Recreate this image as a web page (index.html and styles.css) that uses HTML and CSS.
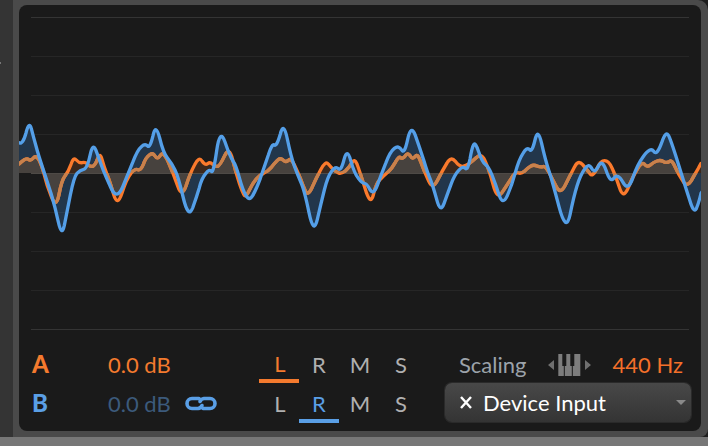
FILE: index.html
```html
<!DOCTYPE html>
<html lang="en">
<head>
<meta charset="utf-8">
<title>Oscilloscope</title>
<link rel="stylesheet" href="styles.css">
</head>
<body>
<div class="window">
  <div class="main">
    <div class="side"><span class="side-mark"></span></div>
    <div class="panel">
      <div class="inner">
        <svg class="scope" viewBox="57 15 2046 1005" width="682" height="335" aria-hidden="true">
          <defs>
            <path id="orange-wave" d="M0,519 L0,492 L57,492 Q78,472 85,478 Q92,483 100,474 Q108,464 117,480 Q125,495 133,525 Q140,555 154,590 Q168,628 177,584 Q185,540 195,528 Q205,515 213,493 Q220,470 229,480 Q238,490 247,488 Q255,485 263,493 Q270,500 278,499 Q285,497 293,476 Q300,455 306,478 Q312,500 321,523 Q330,545 341,584 Q352,622 366,579 Q380,535 393,520 Q405,505 414,509 Q422,512 430,493 Q437,473 448,465 Q458,456 465,468 Q472,480 481,466 Q490,452 505,486 Q520,520 533,558 Q545,595 558,558 Q570,520 584,494 Q597,468 606,483 Q615,497 623,491 Q630,485 638,493 Q645,500 653,499 Q660,497 674,467 Q688,437 698,479 Q708,520 718,550 Q728,580 733,586 Q738,592 748,571 Q758,550 768,538 Q778,525 791,520 Q803,515 813,503 Q823,490 832,481 Q841,472 849,480 Q856,488 865,481 Q873,473 883,494 Q893,515 901,535 Q908,555 916,573 Q923,590 936,563 Q948,535 962,509 Q976,482 985,492 Q993,502 1001,509 Q1008,515 1016,519 Q1023,523 1036,513 Q1048,502 1056,488 Q1063,474 1071,492 Q1078,510 1095,565 Q1111,620 1120,585 Q1128,550 1141,538 Q1153,525 1165,515 Q1176,505 1186,487 Q1196,468 1202,473 Q1208,478 1216,467 Q1223,456 1231,468 Q1238,480 1246,469 Q1253,458 1263,487 Q1273,515 1286,543 Q1298,570 1313,540 Q1328,510 1341,489 Q1353,468 1366,484 Q1378,500 1388,499 Q1398,497 1407,491 Q1416,485 1430,472 Q1444,458 1455,482 Q1466,505 1479,553 Q1491,600 1506,578 Q1521,555 1534,535 Q1546,515 1555,519 Q1564,522 1573,514 Q1581,505 1591,499 Q1601,493 1611,498 Q1621,502 1629,500 Q1636,497 1646,516 Q1656,535 1669,560 Q1681,585 1696,555 Q1711,525 1723,502 Q1734,478 1748,494 Q1761,510 1770,521 Q1778,532 1790,507 Q1801,482 1814,482 Q1826,482 1836,504 Q1846,525 1858,562 Q1869,598 1883,567 Q1896,535 1911,509 Q1926,483 1934,493 Q1941,503 1951,495 Q1961,486 1971,483 Q1981,479 1991,485 Q2001,490 2009,484 Q2016,478 2026,502 Q2036,525 2049,544 Q2061,563 2074,542 Q2086,520 2095,505 Q2103,490 2103,490 L2160,490 L2160,519"/>
            <path id="blue-wave" d="M0,519 L0,428 L57,428 Q68,436 78,399 Q87,362 94,386 Q100,410 108,438 Q115,465 128,503 Q140,540 153,580 Q165,620 175,666 Q185,712 193,676 Q200,640 211,585 Q222,530 231,520 Q240,510 251,508 Q262,505 270,467 Q278,428 287,449 Q295,470 305,498 Q315,525 333,564 Q350,602 368,561 Q385,520 399,485 Q412,450 424,440 Q435,430 443,438 Q450,445 459,407 Q467,368 479,414 Q490,460 503,475 Q515,490 525,510 Q535,530 550,594 Q565,657 578,624 Q590,590 598,563 Q605,535 617,521 Q628,506 634,514 Q640,522 650,452 Q660,382 675,426 Q690,470 699,483 Q708,495 718,533 Q728,570 738,587 Q748,604 758,587 Q768,570 781,535 Q793,500 805,465 Q816,430 823,435 Q830,440 841,402 Q851,363 862,417 Q873,470 883,498 Q893,525 903,548 Q913,570 927,638 Q941,706 952,658 Q963,610 973,570 Q983,530 995,514 Q1006,497 1015,506 Q1023,515 1032,479 Q1041,442 1052,481 Q1063,520 1075,535 Q1086,550 1093,550 Q1100,550 1110,569 Q1120,587 1132,556 Q1143,525 1157,490 Q1170,455 1183,445 Q1196,435 1205,450 Q1213,465 1223,418 Q1233,371 1246,406 Q1258,440 1271,480 Q1283,520 1291,538 Q1298,555 1310,598 Q1321,641 1332,611 Q1343,580 1353,553 Q1363,525 1376,511 Q1388,497 1396,505 Q1403,512 1410,477 Q1416,442 1421,434 Q1426,425 1436,455 Q1446,485 1456,493 Q1466,500 1476,525 Q1486,550 1497,584 Q1508,618 1522,587 Q1536,555 1546,518 Q1556,480 1569,460 Q1581,440 1589,449 Q1596,458 1605,420 Q1614,381 1625,431 Q1636,480 1646,510 Q1656,540 1677,620 Q1698,700 1710,645 Q1721,590 1731,558 Q1741,525 1754,507 Q1766,488 1775,505 Q1784,522 1795,499 Q1806,475 1819,513 Q1831,550 1842,534 Q1853,518 1869,547 Q1884,575 1898,535 Q1911,495 1931,468 Q1951,440 1961,454 Q1971,468 1985,428 Q1998,388 2007,409 Q2016,430 2036,495 Q2056,560 2069,600 Q2081,641 2089,626 Q2096,610 2103,580 L2160,500 L2160,519"/>
            <clipPath id="orange-clip"><use href="#orange-wave"/></clipPath>
            <clipPath id="blue-clip"><use href="#blue-wave"/></clipPath>
          </defs>
          <path class="grid-top" d="M93,52.5H2067M93,988.5H2067"/>
          <path class="grid" d="M93,169.5H2067M93,286.5H2067M93,403.5H2067M93,637.5H2067M93,754.5H2067M93,871.5H2067"/>
          <use href="#orange-wave" class="fill-orange"/>
          <use href="#blue-wave" class="fill-blue"/>
          <use href="#blue-wave" class="fill-both" clip-path="url(#orange-clip)"/>
          <path class="grid-centre" d="M93,520.5H2067"/>
          <use href="#orange-wave" class="line-orange"/>
          <g clip-path="url(#blue-clip)"><use href="#orange-wave" class="line-orange-muted"/></g>
          <use href="#blue-wave" class="line-blue"/>
        </svg>
        <div class="controls">
          <div class="channel channel-a">A</div>
          <div class="db db-a">0.0 dB</div>
          <div class="link-slot"></div>
          <div class="key key-l key-a">L</div>
          <div class="key">R</div>
          <div class="key key-m">M</div>
          <div class="key key-s">S</div>
          <div class="spacer"></div>
          <div class="scaling">
            <span class="scaling-label">Scaling</span>
            <svg class="piano" width="44" height="24" viewBox="0 0 44 24" aria-hidden="true">
              <path class="piano-arrow" d="M0,12 6,7V17ZM43,12 37,7V17Z"/>
              <rect class="piano-body" x="10.3" y="1" width="22" height="22"/>
              <path class="piano-black" d="M14.3,1H18.3V13H14.3ZM22.3,1H26.3V13H22.3Z"/>
              <path class="piano-gap" d="M16.3,13V23M24.3,13V23"/>
            </svg>
            <span class="hz">440 Hz</span>
          </div>

          <div class="channel channel-b">B</div>
          <div class="db db-b">0.0 dB</div>
          <div class="link-slot">
            <svg class="link" width="32" height="15" viewBox="0 0 32 15" aria-hidden="true">
              <path class="link-line" d="M14,2.5H7a5,5 0 0 0 0,10H13a5,5 0 0 0 4,-3M18,12.5H25a5,5 0 0 0 0,-10H19a5,5 0 0 0 -4,3"/>
            </svg>
          </div>
          <div class="key key-l">L</div>
          <div class="key key-b">R</div>
          <div class="key key-m">M</div>
          <div class="key key-s">S</div>
          <div class="spacer"></div>
          <div class="device">
            <svg class="device-x" width="14" height="13" viewBox="0 0 14 13" aria-hidden="true">
              <path class="device-x-line" d="M2,1 12,12M12,1 2,12"/>
            </svg>
            <span class="device-name">Device Input</span>
            <span class="device-arrow"></span>
          </div>
        </div>
      </div>
    </div>
  </div>
  <div class="footer"></div>
</div>
</body>
</html>
```

FILE: styles.css
```css
* { box-sizing: border-box; }
html, body { margin: 0; padding: 0; background: #1a1a1a; }
body { width: 708px; height: 446px; overflow: hidden; font-family: "Lato", sans-serif; }
.window { width: 708px; height: 446px; display: flex; flex-direction: column; background: #777; }
.main { height: 437px; display: flex; background: #1e1e1e; }
.side { width: 13px; position: relative; background: #343434; }
.side-mark { position: absolute; left: 0; top: 62px; width: 1px; height: 2px; background: #777; }
.panel { flex: 1; background: #4a4a4a; padding: 5px 7px 6px 6px; border-top-right-radius: 10px; border-bottom-right-radius: 8px; }
.inner { height: 426px; background: #1a1a1a; border-radius: 8px; overflow: hidden; }
.scope { display: block; }
.grid { stroke: #262626; stroke-width: 3; fill: none; }
.grid-top { stroke: #343434; stroke-width: 3; fill: none; }
.grid-centre { stroke: #4e4a46; stroke-width: 3; fill: none; }
.fill-orange { fill: rgba(255, 122, 42, 0.15); }
.fill-blue { fill: rgba(66, 154, 250, 0.22); }
.fill-both { fill: #47423e; }
.line-orange { fill: none; stroke: #fb7a2c; stroke-width: 10; stroke-linejoin: round; }
.line-orange-muted { fill: none; stroke: #c8814c; stroke-width: 10; stroke-linejoin: round; }
.line-blue { fill: none; stroke: #549fe8; stroke-width: 10; stroke-linejoin: round; }
.controls { display: grid; grid-template-columns: 76px 77px 74px 40px 40px 40px 40px 26px 246px; grid-template-rows: 39px 39px; padding: 5px 0 0 13px; }
.channel { font-weight: 900; font-size: 24px; display: flex; align-items: center; padding-bottom: 2px; }
.channel-a { color: #f47a2e; }
.channel-b { color: #5a9fe6; }
.db { font-size: 22px; display: flex; align-items: center; }
.db-a { color: #f47a2e; }
.db-b { color: #3c5a7c; }
.link-slot { display: flex; align-items: center; }
.key { font-size: 22px; color: #b0b0b0; display: flex; align-items: center; justify-content: center; height: 39px; }
.key-l { padding-left: 2px; }
.key-m { padding-left: 2px; }
.key-s { padding-left: 4px; }
.key-a { color: #f47a2e; border-bottom: 4px solid #f47a2e; padding-top: 4px; margin-top: -1px; }
.key-b { color: #5a9fe6; border-bottom: 4px solid #5a9fe6; padding-top: 4px; }
.scaling { display: flex; align-items: center; padding: 0 8px 0 14px; }
.scaling-label { font-size: 22px; color: #9ca3aa; }
.piano { margin-left: 21px; }
.piano-arrow { fill: #6f6f6f; }
.piano-body { fill: #7d7d7d; }
.piano-black { fill: #1a1a1a; }
.piano-gap { stroke: #1a1a1a; stroke-width: 1; fill: none; }
.hz { font-size: 22px; color: #f4702a; margin-left: auto; }
.device { display: flex; align-items: center; height: 39px; margin-top: -1px; border-radius: 7px; background: linear-gradient(#484848, #343434); box-shadow: 0 0 0 1px #2a2a2a; padding: 0 5px 0 14px; }
.device-x { display: block; margin-right: 10px; }
.device-x-line { stroke: #fff; stroke-width: 2.4; fill: none; }
.device-name { color: #fff; font-size: 22px; }
.device-arrow { margin-left: auto; width: 0; height: 0; border-left: 5.5px solid transparent; border-right: 5.5px solid transparent; border-top: 5px solid #8a8a8a; }
.link { display: block; }
.link-line { fill: none; stroke: #5a9fe6; stroke-width: 3.6; stroke-linecap: round; }
.footer { height: 9px; background: #777; }
```
